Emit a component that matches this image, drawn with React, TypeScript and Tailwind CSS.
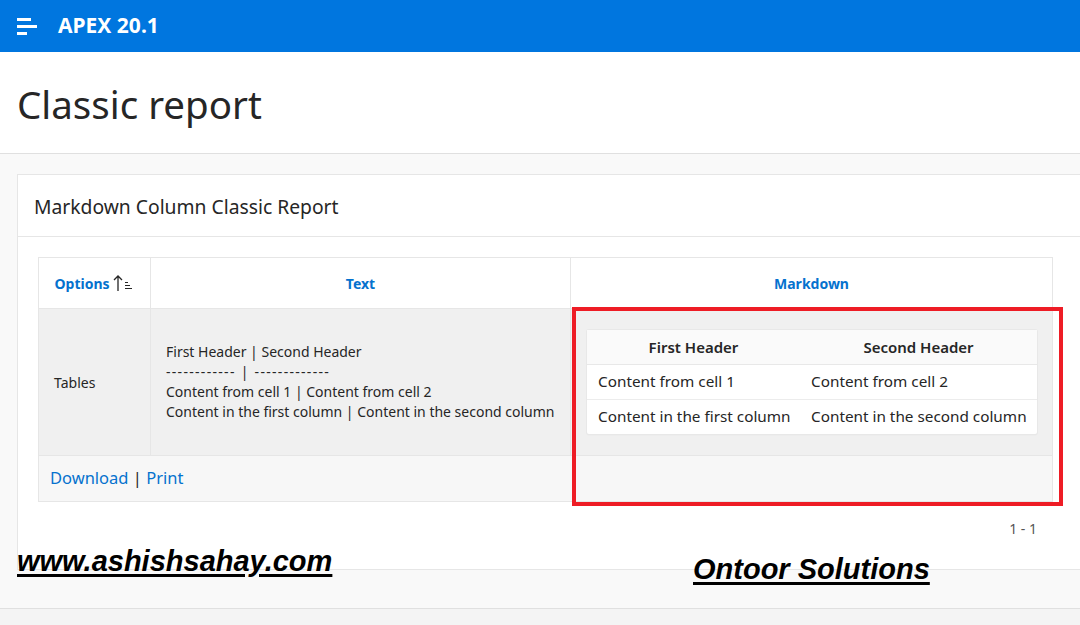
import React from "react";

const font = { fontFamily: '"Noto Sans", "Open Sans", sans-serif' };

function SortIcon() {
  return (
    <svg width="22" height="18" viewBox="0 0 22 18" className="inline-block">
      <path d="M5 17V2M1 6l4-4 4 4" stroke="#262626" strokeWidth="1.3" fill="none" />
      <path d="M12 8.5h3M12 11.5h5M12 14.5h7" stroke="#262626" strokeWidth="1.2" />
    </svg>
  );
}

export default function App() {
  return (
    <div className="relative w-[1080px] h-[625px] overflow-hidden bg-[#f9f9f9] text-[#262626]" style={font}>
      {/* Header */}
      <div className="h-[52px] bg-[#0076df] flex items-center">
        <div className="w-[58px] pl-[17px] flex flex-col gap-[4px]">
          <div className="h-[3px] w-[14px] bg-white" />
          <div className="h-[3px] w-[20px] bg-white" />
          <div className="h-[3px] w-[10px] bg-white" />
        </div>
        <div className="text-white font-bold text-[21px] tracking-[0px]">APEX 20.1</div>
      </div>

      {/* Title */}
      <div className="h-[102px] bg-white border-b border-[#e0e0e0] flex items-center pl-[17px] pt-[4px]">
        <h1 className="text-[38.5px] leading-none text-[#262626]">Classic report</h1>
      </div>

      {/* Body */}
      <div className="pt-[20px] pl-[17px] h-[455px] border-b border-[#e0e0e0]">
        <div className="w-[1100px] h-[396px] bg-white border border-[#e6e6e6]">
          <div className="h-[62px] border-b border-[#e6e6e6] flex items-center pl-[16px] pt-[3px]">
            <h2 className="text-[19.3px] text-[#262626]">Markdown Column Classic Report</h2>
          </div>
          <div className="pt-[20px] pl-[20px]">
            <table className="w-[1015px] border-collapse border border-[#e6e6e6] text-[14px]">
              <thead>
                <tr className="h-[51px]">
                  <th className="w-[112px] border border-[#e6e6e6] text-[#0572ce] font-bold text-[14px] align-middle">
                    <span className="inline-flex items-center gap-[3px]">
                      Options <SortIcon />
                    </span>
                  </th>
                  <th className="w-[420px] border border-[#e6e6e6] text-[#0572ce] font-bold text-[14px]">Text</th>
                  <th className="border border-[#e6e6e6] text-[#0572ce] font-bold text-[14px]">Markdown</th>
                </tr>
              </thead>
              <tbody>
                <tr className="h-[147px] bg-[#f0f0f0]">
                  <td className="border border-[#e6e6e6] pl-[15px] align-middle text-[14px]">Tables</td>
                  <td className="border border-[#e6e6e6] pl-[15px] align-middle text-[14px] leading-[20px]">
                    <div>First Header | Second Header</div>
                    <div className="tracking-[1.3px]">------------ | -------------</div>
                    <div>Content from cell 1 | Content from cell 2</div>
                    <div>Content in the first column | Content in the second column</div>
                  </td>
                  <td className="border border-[#e6e6e6] align-middle pl-[16px] pr-[15px]">
                    <table className="w-[450px] bg-white border-collapse shadow-[0_0_0_1px_#e8e8e8,0_1px_2px_rgba(0,0,0,0.06)] rounded-[2px] text-[15.3px]">
                      <thead>
                        <tr className="h-[34px] bg-[#fafafa] border-b border-[#e8e8e8]">
                          <th className="w-[213px] font-semibold text-center text-[15px]">First Header</th>
                          <th className="font-semibold text-center text-[15px]">Second Header</th>
                        </tr>
                      </thead>
                      <tbody>
                        <tr className="h-[35px] border-b border-[#ececec]">
                          <td className="pl-[11px] text-left">Content from cell 1</td>
                          <td className="pl-[11px] text-left">Content from cell 2</td>
                        </tr>
                        <tr className="h-[35px]">
                          <td className="pl-[11px] text-left">Content in the first column</td>
                          <td className="pl-[11px] text-left">Content in the second column</td>
                        </tr>
                      </tbody>
                    </table>
                  </td>
                </tr>
                <tr className="h-[46px] bg-[#f7f7f7]">
                  <td colSpan={3} className="border border-[#e6e6e6] pl-[11px] text-[16.5px]">
                    <span className="text-[#0572ce]">Download</span>
                    <span className="text-[#262626]"> | </span>
                    <span className="text-[#0572ce]">Print</span>
                  </td>
                </tr>
              </tbody>
            </table>
            <div className="w-[1015px] flex justify-end pr-[16px] pt-[16px] text-[14px] text-[#555]">1 - 1</div>
          </div>
        </div>
      </div>
      <div className="h-[20px] bg-[#f4f4f4]" />

      {/* Red highlight overlay */}
      <div className="absolute left-[572px] top-[307px] w-[491px] h-[199px] border-[4px] border-[#ee1c25]" />

      {/* Watermarks */}
      <div
        className="absolute left-[17px] top-[540px] text-[29px] font-bold italic underline decoration-[3px] underline-offset-[3px] text-black"
        style={{ fontFamily: '"Liberation Sans", Arial, sans-serif' }}
      >
        www.ashishsahay.com
      </div>
      <div
        className="absolute left-[693px] top-[548px] text-[29px] font-bold italic underline decoration-[3px] underline-offset-[3px] text-black"
        style={{ fontFamily: '"Liberation Sans", Arial, sans-serif' }}
      >
        Ontoor Solutions
      </div>
    </div>
  );
}
